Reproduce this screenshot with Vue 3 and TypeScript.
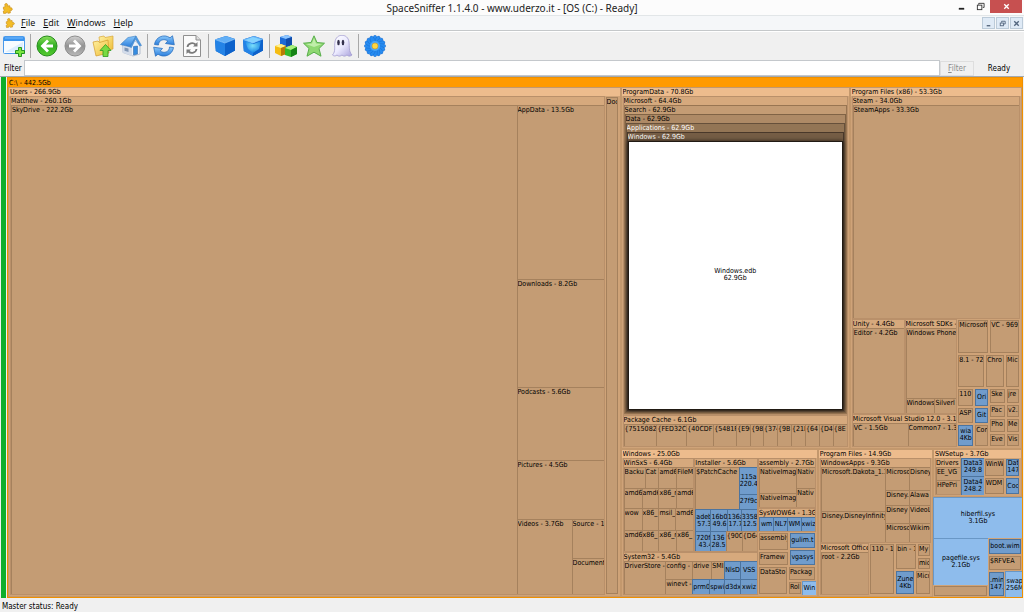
<script setup lang="ts">
import { h, ref } from 'vue'
import type { VNode } from 'vue'

type Kind = 'folder' | 'file' | 'top' | 'focus'
interface Tile {
  size: number
  label?: string
  dir?: 'row' | 'col'
  kids?: Tile[]
  kind?: Kind
  loose?: boolean
  depth?: number
}

const row = (size: number, ...kids: Tile[]): Tile => ({ size, dir: 'row', kids })
const col = (size: number, ...kids: Tile[]): Tile => ({ size, dir: 'col', kids })
const box = (size: number, depth: number, label: string, dir: 'row' | 'col', ...kids: Tile[]): Tile => ({ size, depth, label, dir, kids })
const dir = (size: number, label: string): Tile => ({ size, label, kind: 'folder' })
const file = (size: number, label: string): Tile => ({ size, label, kind: 'file' })
const top = (size: number, label: string): Tile => ({ size, label, kind: 'top' })
const loose = (tile: Tile): Tile => ({ ...tile, loose: true })

const users = box(612, 1, 'Users - 266.9Gb', 'row',
  box(595, 2, 'Matthew - 260.1Gb', 'row',
    dir(505, 'SkyDrive - 222.2Gb'),
    col(87,
      dir(174, 'AppData - 13.5Gb'),
      dir(107, 'Downloads - 8.2Gb'),
      dir(73, 'Podcasts - 5.6Gb'),
      dir(59, 'Pictures - 4.5Gb'),
      row(75,
        dir(55, 'Videos - 3.7Gb'),
        col(32, dir(39, 'Source - 1'), dir(36, 'Document')),
      ),
    ),
  ),
  loose(dir(14, 'Doc')),
)

const programData = box(229, 1, 'ProgramData - 70.8Gb', 'col',
  box(318, 2, 'Microsoft - 64.4Gb', 'row',
    box(1, 3, 'Search - 62.9Gb', 'row',
      box(1, 4, 'Data - 62.9Gb', 'row',
        box(1, 5, 'Applications - 62.9Gb', 'row',
          box(1, 6, 'Windows - 62.9Gb', 'row', { size: 1, label: 'Windows.edb\n62.9Gb', kind: 'focus' }),
        ),
      ),
    ),
  ),
  box(32, 2, 'Package Cache - 6.1Gb', 'row',
    dir(33, '{7515082E'), dir(30, '{FED32C'), dir(27, '{40CDF'), dir(23, '{5481F'), dir(14, '{E96'), dir(13, '{98'),
    dir(14, '{374'), dir(14, '{9B'), dir(14, '{21D'), dir(14, '{64'), dir(14, '{D4'), dir(14, '{8E'),
  ),
)

const programFilesX86 = box(172, 1, 'Program Files (x86) - 53.3Gb', 'col',
  box(223, 2, 'Steam - 34.0Gb', 'row', dir(1, 'SteamApps - 33.3Gb')),
  row(127,
    col(106,
      row(94,
        box(53, 2, 'Unity - 4.4Gb', 'row', dir(1, 'Editor - 4.2Gb')),
        box(53, 2, 'Microsoft SDKs -', 'col',
          dir(69, 'Windows Phone'),
          row(14, dir(29, 'Windows'), dir(22, 'Silverl')),
        ),
      ),
      box(33, 2, 'Microsoft Visual Studio 12.0 - 3.1G', 'row', dir(55, 'VC - 1.5Gb'), dir(49, 'Common7 - 1.3')),
    ),
    col(63,
      row(34, loose(dir(32, 'Microsoft')), loose(dir(31, 'VC - 969'))),
      row(34, loose(dir(28, '8.1 - 72')), loose(dir(20, 'Chro')), loose(dir(15, 'Mic'))),
      row(59,
        col(17, loose(dir(19, '110')), loose(dir(17, 'ASP')), loose(file(23, 'wia\n4Kb'))),
        col(15, loose(file(19, 'Ori')), loose(file(17, 'Git')), loose(dir(23, 'Con'))),
        col(17, loose(dir(16, 'Ske')), loose(dir(14, 'Pac')), loose(dir(15, 'Pho')), loose(dir(14, 'Eve'))),
        col(14, loose(dir(16, 'jre')), loose(dir(14, 'v2.')), loose(dir(15, 'Me')), loose(dir(14, 'Vis'))),
      ),
    ),
  ),
)

const windows = box(197, 1, 'Windows - 25.0Gb', 'row',
  col(136,
    row(95,
      box(72, 2, 'WinSxS - 6.4Gb', 'col',
        row(21, dir(21, 'Backu'), dir(14, 'Cat'), dir(18, 'amd6'), dir(17, 'FileM')),
        row(21, dir(18, 'amd6'), dir(17, 'amd6'), dir(18, 'x86_r'), dir(17, 'amd6')),
        row(22, dir(18, 'wow'), dir(17, 'x86_'), dir(17, 'msil_'), dir(18, 'amd6')),
        row(21, dir(18, 'amd6'), dir(17, 'x86_'), dir(18, 'x86_r'), dir(17, 'x86_')),
      ),
      box(64, 2, 'Installer - 5.6Gb', 'col',
        row(43, dir(43, '$PatchCache'), col(18, file(27, '115a\n220.4'), file(16, '27f9c'))),
        row(22, file(15, 'adeb\n57.3'), file(16, '16b0\n49.6'), file(14, '136a\n17.7'), file(16, '3358\n12.5')),
        row(20, file(15, '720f1\n43.4'), file(15, '136\n28.5'), dir(16, '{90C'), dir(15, '{D64')),
      ),
    ),
    box(43, 2, 'System32 - 5.4Gb', 'row',
      dir(42, 'DriverStore -'),
      col(92,
        row(17, dir(27, 'config -'), dir(19, 'drive'), dir(13, 'SMI'), file(16, 'NlsD'), file(17, 'VSS')),
        row(14, dir(27, 'winevt -'), file(17, 'prm0'), file(15, 'spwi'), file(16, 'd3dx'), file(17, 'xwiz')),
      ),
    ),
  ),
  col(58,
    box(51, 2, 'assembly - 2.7Gb', 'row',
      col(36, dir(26, 'NativeImag'), dir(15, 'NativeImag')),
      col(18, dir(21, 'Nativ'), dir(20, 'Nativ')),
    ),
    box(24, 2, 'SysWOW64 - 1.3G', 'row', file(14, 'wm'), file(14, 'NL7'), file(13, 'WM'), file(14, 'xwiz')),
    row(34,
      col(31, loose(dir(19, 'assembly')), loose(dir(15, 'Framew'))),
      col(27, loose(file(17, 'gulim.t')), loose(file(17, 'vgasys'))),
    ),
    row(29,
      loose(dir(30, 'DataSto')),
      col(28, loose(dir(15, 'Packag')), row(14, loose(dir(14, 'Rol')), top(14, 'Win'))),
    ),
  ),
)

const programFiles = box(115, 1, 'Program Files - 14.9Gb', 'col',
  box(86, 2, 'WindowsApps - 9.3Gb', 'row',
    col(65, dir(44, 'Microsoft.Dakota_1.1'), dir(31, 'Disney.DisneyInfinity')),
    col(24, dir(23, 'Microso'), dir(15, 'Disney.'), dir(18, 'Disney'), dir(19, 'Microsc')),
    col(21, dir(23, 'Disney'), dir(15, 'Alawa'), dir(18, 'VideoL'), dir(19, 'Wikime')),
  ),
  row(52,
    box(50, 2, 'Microsoft Office', 'row', dir(1, 'root - 2.2Gb')),
    loose(dir(26, '110 - 1')),
    col(36,
      row(27, loose(dir(22, 'bin - 1')), col(14, loose(dir(14, 'My')), loose(dir(13, 'mic')))),
      row(25, loose(file(20, 'Zune\n4Kb')), loose(dir(16, 'Micr'))),
    ),
  ),
)

const system = col(89,
  box(49, 1, 'SWSetup - 3.7Gb', 'row',
    box(27, 2, 'Drivers', 'col', dir(14, 'EE_VG'), dir(15, 'HPePri')),
    col(23, file(19, 'Data3\n249.8'), file(20, 'Data4\n248.2')),
    col(22, loose(dir(20, 'WinW')), loose(dir(19, 'WDM'))),
    col(15, loose(file(20, 'Dat\n147')), loose(file(19, 'Coc'))),
  ),
  top(41, 'hiberfil.sys\n3.1Gb'),
  row(59,
    col(55, top(47, 'pagefile.sys\n2.1Gb'), loose(dir(12, ''))),
    col(34,
      loose(file(17, 'boot.wim')),
      loose(dir(16, '$RFVEA')),
      row(26, loose(file(17, '.min\n147.')), top(17, 'swap\n256M')),
    ),
  ),
)

const drive = box(1, 0, 'C:\\ - 442.5Gb', 'row',
  users,
  col(401, row(361, programData, programFilesX86), row(148, windows, programFiles, system)),
)

/* Sizes become fractional grid tracks, so the map scales with the window. */
function tracks(tile: Tile) {
  const list = (tile.kids ?? []).map((kid) => `minmax(0, ${kid.size}fr)`).join(' ')
  return tile.dir === 'row' ? { gridTemplateColumns: list } : { gridTemplateRows: list }
}

function draw(tile: Tile): VNode {
  if (!tile.kids) {
    return h('div', { class: ['leaf', tile.kind, { loose: tile.loose }] }, [h('span', tile.label)])
  }
  const body = h('div', { class: 'split', style: tracks(tile) }, tile.kids.map(draw))
  if (tile.label === undefined) return body
  return h('div', { class: ['box', `level-${tile.depth}`] }, [h('div', { class: 'caption' }, tile.label), body])
}
const SpaceMap = () => draw(drive)

const menus = ['File', 'Edit', 'Windows', 'Help']
const filter = ref('')
const petals = Array.from({ length: 16 }, (_, i) => i * 22.5)
</script>

<template>
  <div class="window">
    <svg class="defs" width="0" height="0" aria-hidden="true">
      <defs>
        <linearGradient id="green" x1="0" y1="0" x2="0" y2="1"><stop offset="0" stop-color="#8be05c" /><stop offset=".5" stop-color="#2fae22" /><stop offset="1" stop-color="#58cc30" /></linearGradient>
        <linearGradient id="grey" x1="0" y1="0" x2="0" y2="1"><stop offset="0" stop-color="#d2d2d2" /><stop offset=".5" stop-color="#929292" /><stop offset="1" stop-color="#bababa" /></linearGradient>
        <linearGradient id="yellow" x1="0" y1="0" x2="1" y2="1"><stop offset="0" stop-color="#fff1a2" /><stop offset="1" stop-color="#edbb35" /></linearGradient>
        <linearGradient id="blue" x1="0" y1="0" x2="0" y2="1"><stop offset="0" stop-color="#8bc9fb" /><stop offset="1" stop-color="#2a7ddc" /></linearGradient>
        <linearGradient id="ghost" x1="0" y1="0" x2="1" y2="1"><stop offset="0" stop-color="#ffffff" /><stop offset=".5" stop-color="#ecebff" /><stop offset="1" stop-color="#aaa2dc" /></linearGradient>
        <radialGradient id="glow" cx=".5" cy=".4" r=".6"><stop offset="0" stop-color="#8cf1ff" /><stop offset="1" stop-color="#1688e8" /></radialGradient>
        <symbol id="puzzle" viewBox="0 0 12 12"><path d="M1.500 4.500l2.300-.8C2.300 2.300 3 .6 4.500.6c1.700 0 2 1.500 1.200 2.600L8.500 3l.3 2.500c1.100-.6 2.400 0 2.400 1.200 0 1.300-1.200 1.800-2.300 1.200l.2 2.900-2.700.4c.3-1.500-1.800-1.700-1.800-.1L1.800 11.400l-.4-2.600c1.500 0 1.700-2 .2-2z" fill="#f3bd27" stroke="#c78914" stroke-width=".7" /></symbol>
        <symbol id="cube" viewBox="0 0 22 22"><path d="M1 4.500L12 1l9 3v11.500L11 21 1.800 16z" fill="#0a5fc4" /><path d="M1 4.500L12 1l9 3-10 4z" fill="#62aff6" /><path d="M1 4.500L11 8v13l-9.200-5z" fill="#2483e6" /><path d="M11 8l10-4v11.500L11 21z" fill="#0d62cb" /><path d="M1 4.500L11 8l10-4" fill="none" stroke="#9ad0ff" stroke-width=".7" /></symbol>
      </defs>
    </svg>

    <header class="titlebar">
      <svg class="app-icon" viewBox="0 0 12 12"><use href="#puzzle" /></svg>
      <h1>SpaceSniffer 1.1.4.0 - www.uderzo.it - [OS (C:) - Ready]</h1>
      <div class="window-buttons">
        <button aria-label="Minimize"><svg viewBox="0 0 10 10"><path d="M2 7.500h6" stroke="#222" stroke-width="2" /></svg></button>
        <button aria-label="Restore"><svg viewBox="0 0 10 10" fill="none" stroke="#333"><path d="M3 3V1.500h6V6H7.500" /><rect x="1.500" y="3.500" width="5" height="5" /></svg></button>
        <button class="close" aria-label="Close"><svg viewBox="0 0 10 10"><path d="M2.500 2.500l5 5m0-5l-5 5" stroke="#fff" stroke-width="1.500" /></svg></button>
      </div>
    </header>

    <nav class="menubar">
      <svg class="app-icon" viewBox="0 0 12 12"><use href="#puzzle" /></svg>
      <button v-for="menu in menus" :key="menu"><u>{{ menu[0] }}</u>{{ menu.slice(1) }}</button>
      <div class="document-buttons">
        <button aria-label="Minimize document"><svg viewBox="0 0 10 10"><path d="M3 7.500h4" stroke="#41536b" stroke-width="1.300" /></svg></button>
        <button aria-label="Restore document"><svg viewBox="0 0 10 10" fill="none" stroke="#53667f"><path d="M4 4V2.500h4V5.500H6.500" /><rect x="2.500" y="4.500" width="3.500" height="3" /></svg></button>
        <button aria-label="Close document"><svg viewBox="0 0 10 10"><path d="M2.500 2.500l5 5m0-5l-5 5" stroke="#53667f" stroke-width="1.500" /></svg></button>
      </div>
    </nav>

    <div class="toolbar">
      <button aria-label="New view">
        <svg viewBox="0 0 22 22"><rect x=".5" y="1.500" width="21" height="17" rx="1" fill="#f8fcff" stroke="#4a9aeb" /><path d="M1 2h20v4H1z" fill="#3a94ee" /><path d="M2 3h18" stroke="#78bcff" /><path d="M2 17L20 7v10z" fill="#dceeff" /><path d="M15.500 12.500h3v3h3v3h-3v3h-3v-3h-3v-3h3z" fill="#7be440" stroke="#168b12" stroke-width=".9" /></svg>
      </button>
      <i></i>
      <button aria-label="Back">
        <svg viewBox="0 0 22 22"><circle cx="11" cy="11" r="10" fill="url(#green)" stroke="#278b1e" /><path d="M11 4.500L4.500 11l6.500 6.500 2-2-3-3h7v-3h-7l3-3z" fill="#fff" /></svg>
      </button>
      <button aria-label="Forward">
        <svg viewBox="0 0 22 22"><circle cx="11" cy="11" r="10" fill="url(#grey)" stroke="#8d8d8d" /><path d="M11 4.500l6.500 6.500-6.500 6.500-2-2 3-3H5v-3h7l-3-3z" fill="#fff" /></svg>
      </button>
      <button aria-label="Up one folder">
        <svg viewBox="0 0 22 22"><path d="M7 2l5-1 1 1.500L21 1v13l-12 3z" fill="url(#yellow)" stroke="#d9a83a" stroke-width=".7" /><path d="M1 7l5-1 1.500 1.500L16 5l1 13-13 3z" fill="url(#yellow)" stroke="#d39b29" stroke-width=".7" /><path d="M13.500 9.500l5.500 6h-3v6h-5v-6H8z" fill="#7ada42" stroke="#2c9b21" stroke-width=".8" /></svg>
      </button>
      <button aria-label="Home">
        <svg viewBox="0 0 22 22"><path d="M2.500 10L14 5l6 5v9l-7 2-10-3.500z" fill="#eef3fa" stroke="#8ea0ba" stroke-width=".6" /><path d="M2.500 10.500L12 12v9l-9.500-3.500z" fill="#d3dcea" /><path d="M.5 9.500L8 2.500l8-1.500-5.500 11z" fill="url(#blue)" stroke="#3a7cc0" stroke-width=".6" /><path d="M16 1l5.500 9.500-1.800.5L15.500 4l-4 8.500-1.500-.5z" fill="#4d9be6" stroke="#3a7cc0" stroke-width=".5" /><path d="M4.500 12.500l4 1v3.500l-4-1.200z" fill="#7f95b3" /><path d="M13.500 11.500l4-.5v8l-4 1z" fill="#368ce0" stroke="#245f9f" stroke-width=".5" /></svg>
      </button>
      <i></i>
      <button aria-label="Refresh">
        <svg viewBox="0 0 22 22" fill="url(#blue)" stroke="#2b70bf" stroke-width=".8" stroke-linejoin="round"><path d="M1.500 9.500C2.500 2 11-1.500 17 2.800L19.500.8l1.800 9-8.800-1.300 2.300-2.500C11 3.200 5.500 5 5.500 10z" /><path d="M20.500 12.500c-1 7.500-9.500 11-15.500 6.700L2.500 21.200.7 12.200l8.800 1.300L7.200 16c3.800 2.800 9.300 1 9.300-4z" /></svg>
      </button>
      <button aria-label="Refresh document">
        <svg viewBox="0 0 22 22"><path d="M2.500.500H15L19.500 5v16.500h-17z" fill="#fbfbfb" stroke="#8f8f8f" /><path d="M15 .500V5h4.500" fill="#ddd" stroke="#8f8f8f" /><g fill="none" stroke="#7a7a7a" stroke-width="1.800"><path d="M6.500 12c.5-4 5.500-5 8-2.500M15.500 14c-.5 4-5.500 5-8 2.500" /></g><path d="M16.500 7v4.500H12zM5.500 19v-4.500H10z" fill="#7a7a7a" /></svg>
      </button>
      <i></i>
      <button aria-label="Less detail"><svg viewBox="0 0 22 22"><use href="#cube" /></svg></button>
      <button aria-label="More detail">
        <svg viewBox="0 0 22 22"><use href="#cube" /><path d="M3 6l8 3 8-3-2 8-6 4-5-4z" fill="url(#glow)" opacity=".85" /><path d="M3 5l8-3 8 2.500L11 8z" fill="#84d3ff" /></svg>
      </button>
      <i></i>
      <button aria-label="File classes">
        <svg viewBox="0 0 22 22"><path d="M5 2l7-2 5 2v8l-6 2-6-2z" fill="#1d6bd5" /><path d="M5 2l7-2 5 2-6 2z" fill="#8cc5ff" /><path d="M11 4l6-2v8l-6 2z" fill="#0f4caa" /><path d="M0 11l6-2 5 2v8l-5 2-6-3z" fill="#f4bc12" /><path d="M0 11l6-2 5 2-5 2z" fill="#fff18a" /><path d="M6 13l5-2v8l-5 2z" fill="#b87b05" /><path d="M10 13l7-3 5 2v7l-6 3-6-2z" fill="#35b929" /><path d="M10 13l7-3 5 2-6 3z" fill="#a9f07c" /><path d="M16 15l6-3v7l-6 3z" fill="#168316" /></svg>
      </button>
      <button aria-label="Favourites">
        <svg viewBox="0 0 22 22"><path d="M11 .8l3 6.700 7.500.7-5.500 5.300 2 7.700-7-4-7 4 2-7.700L.5 8.200 8 7.500z" fill="#8fd872" stroke="#59ae4c" stroke-linejoin="round" /><path d="M11 3l2 5.500 6 .6-8 2.900-8-2.900 6-.6z" fill="#c0eeaa" /></svg>
      </button>
      <button aria-label="Ghosts">
        <svg viewBox="0 0 22 22"><path d="M1.500 20C5 16 3 12 4 7c1-9 13-9 14 0 .700 5-.500 9 3 13-2 1.500-3.500 1.500-5 0-2 1.500-3.500 1.500-5 0-2 1.500-3.500 1.500-5 0-1.500 1.300-3 1.300-4.500 0z" fill="url(#ghost)" stroke="#9992cc" stroke-width=".7" /><ellipse cx="7.500" cy="7.500" rx="1.300" ry="2.800" fill="#34314d" /><ellipse cx="12" cy="7.500" rx="1.300" ry="2.800" fill="#34314d" /></svg>
      </button>
      <i></i>
      <button aria-label="Configure">
        <svg viewBox="0 0 22 22"><g fill="#268cf1" stroke="#1765c8" stroke-width=".4"><ellipse v-for="a in petals" :key="a" cx="11" cy="5" rx="2.300" ry="4.700" :transform="`rotate(${a} 11 11)`" /></g><circle cx="11" cy="11" r="5" fill="#4ba7f8" /><circle cx="11" cy="11" r="3" fill="#ffd642" stroke="#d99b13" stroke-width=".6" /></svg>
      </button>
    </div>

    <form class="filterbar" @submit.prevent>
      <label for="filter">Filter</label>
      <input id="filter" v-model="filter" type="text" />
      <button type="submit" disabled><u>F</u>ilter</button>
      <output>Ready</output>
    </form>

    <main class="content">
      <div class="gauge"></div>
      <div class="map"><SpaceMap /></div>
    </main>

    <footer class="statusbar">Master status: Ready</footer>
  </div>
</template>

<style>
body {
  margin: 0;
}
</style>

<style scoped>
.window {
  display: flex;
  flex-direction: column;
  height: 100vh;
  overflow: hidden;
  background: #f0f0f0;
  color: #000;
  font-family: "DejaVu Sans Condensed", "DejaVu Sans", sans-serif;
  font-size: 8px;
}
.defs {
  position: absolute;
}
button {
  margin: 0;
  padding: 0;
  border: 0;
  background: none;
  color: inherit;
  font: inherit;
}
.titlebar {
  display: grid;
  grid-template-columns: 80px 1fr 80px;
  height: 16px;
  background: #fcfcfc;
  border-bottom: 1px solid #e2e6e8;
  box-sizing: border-box;
}
.app-icon {
  width: 11px;
  height: 11px;
  margin: 3px 0 0 2px;
}
h1 {
  margin: 0;
  text-align: center;
  font: 10px/16px "Noto Sans", sans-serif;
  color: #222;
  white-space: nowrap;
}
.window-buttons {
  display: flex;
  justify-content: flex-end;
  align-items: flex-start;
  padding-right: 2px;
}
.window-buttons button {
  display: grid;
  place-items: center;
  width: 19px;
  height: 13px;
}
.window-buttons svg {
  width: 9px;
  height: 9px;
}
.window-buttons .close {
  width: 32px;
  background: #c75050;
}
.menubar {
  display: flex;
  height: 15px;
  background: #f5f7f9;
  border-bottom: 1px solid #c5c8ca;
  box-sizing: border-box;
  font: 9px/14px "Open Sans", sans-serif;
}
.menubar .app-icon {
  width: 10px;
  height: 10px;
  margin: 2px 6px 0 5px;
}
.menubar > button {
  margin-right: 8px;
}
.document-buttons {
  display: flex;
  gap: 1px;
  margin: 1px 1px 0 auto;
}
.document-buttons button {
  display: grid;
  place-items: center;
  width: 13px;
  height: 12px;
  border: 1px solid #bccbd9;
  background: #dfeaf6;
}
.document-buttons svg {
  width: 9px;
  height: 9px;
}
.toolbar {
  display: flex;
  align-items: center;
  height: 29px;
  border-top: 1px solid #fff;
  box-sizing: border-box;
}
.toolbar button {
  display: grid;
  place-items: center;
  width: 28px;
  height: 28px;
}
.toolbar svg {
  width: 22px;
  height: 22px;
}
.toolbar i {
  width: 1px;
  height: 24px;
  margin: 0 2px;
  background: #a8a8a8;
}
.filterbar {
  display: flex;
  align-items: center;
  height: 17px;
  border-bottom: 1px solid #a3aab2;
  box-sizing: border-box;
}
.filterbar label {
  width: 20px;
  padding-left: 4px;
}
.filterbar input {
  flex: 1;
  min-width: 0;
  height: 16px;
  box-sizing: border-box;
  padding: 0 2px;
  border: 1px solid #c4c8cc;
  background: #fff;
  font: inherit;
}
.filterbar button {
  width: 34px;
  height: 15px;
  border: 1px solid #dedede;
  color: #8b8b8b;
}
.filterbar output {
  width: 50px;
  text-align: center;
}
.content {
  display: flex;
  flex: 1;
  min-height: 0;
  padding: 0 1px;
}
.gauge {
  width: 5px;
  margin-right: 1px;
  background: #0fae2b;
}
.map {
  flex: 1;
  min-width: 0;
  display: grid;
  font-size: 7px;
  line-height: 8px;
  white-space: nowrap;
}
.statusbar {
  height: 14px;
  padding-left: 2px;
  line-height: 18px;
}
.map :deep(.split) {
  flex: 1;
  display: grid;
  min-width: 0;
  min-height: 0;
}
.map :deep(.box) {
  display: flex;
  flex-direction: column;
  min-width: 0;
  min-height: 0;
  box-sizing: border-box;
  padding: 0 1px 1px;
  border: 1px solid #b9906a;
}
.map :deep(.caption) {
  flex: none;
  height: 8px;
  overflow: hidden;
}
.map :deep(.level-0) {
  padding: 0;
  background: #ff9a00;
  border-color: #ef9000;
}
.map :deep(.level-0 > .caption) {
  height: 9px;
  padding-left: 1px;
  line-height: 10px;
}
.map :deep(.level-0 > .split) {
  background: #cfa378;
}
.map :deep(.level-1) {
  background: linear-gradient(#edbc8d 8px, #cfa378 8px);
  border-color: #c3986d;
}
.map :deep(.level-2) {
  padding: 0;
  background: linear-gradient(#d6a97d 8px, #cfa378 8px);
}
.map :deep(.level-3),
.map :deep(.level-4),
.map :deep(.level-5),
.map :deep(.level-6) {
  padding: 0;
}
.map :deep(.level-3) {
  background: #c49c74;
  border-color: #987552;
}
.map :deep(.level-4) {
  background: #ae8a66;
  border-color: #806345;
}
.map :deep(.level-5) {
  background: #937555;
  border-color: #66503b;
  color: #fff;
}
.map :deep(.level-6) {
  background: #755d45;
  border-color: #49382a;
}
.map :deep(.leaf) {
  min-width: 0;
  min-height: 0;
  box-sizing: border-box;
  overflow: hidden;
  border: 1px solid #a5815d;
  border-width: 1px 0 0 1px;
  background: #c49c74;
  line-height: 9px;
}
.map :deep(.leaf.loose) {
  margin: 1px;
  border-width: 1px;
}
.map :deep(.file),
.map :deep(.top),
.map :deep(.focus) {
  display: flex;
  align-items: center;
  justify-content: safe center;
  text-align: center;
  white-space: pre;
  line-height: 7px;
}
.map :deep(.file) {
  background: #709ccc;
  border-color: #4c749f;
}
.map :deep(.top) {
  background: #8ebcec;
  border-color: #6997c6;
}
.map :deep(.focus) {
  z-index: 1;
  border: 1px solid #211a13;
  background: #fff;
  color: #000;
  line-height: 7px;
  box-shadow: 0 0 4px #211a13;
}
</style>
